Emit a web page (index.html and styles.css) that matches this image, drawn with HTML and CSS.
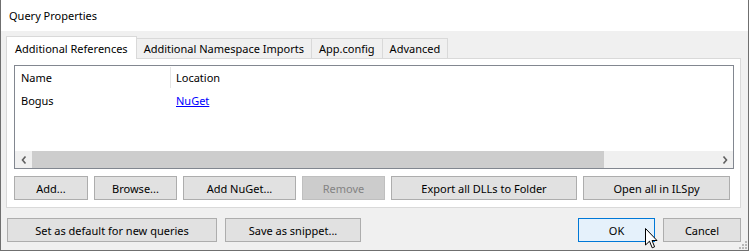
FILE: index.html
```html
<!DOCTYPE html>
<html lang="en">
<head>
    <meta charset="UTF-8">
    <title>Query Properties</title>
    <link rel="stylesheet" href="styles.css">
</head>
<body>
    <div class="window">
        <div class="titlebar">Query Properties</div>

        <div class="tabs">
            <div class="tab-strip">
                <div class="tab active">Additional References</div>
                <div class="tab">Additional Namespace Imports</div>
                <div class="tab">App.config</div>
                <div class="tab">Advanced</div>
            </div>
            <div class="tab-page">
                <div class="listview">
                    <div class="lv-header">
                        <div class="col col-name">Name</div>
                        <div class="col col-loc">Location</div>
                    </div>
                    <div class="lv-row">
                        <div class="col col-name">Bogus</div>
                        <div class="col col-loc"><a href="#" class="link">NuGet</a></div>
                    </div>
                    <div class="hscroll">
                        <div class="arrow">
                            <svg width="6" height="8" viewBox="0 0 6 8"><polyline points="4.5,0.5 1.5,4 4.5,7.5" fill="none" stroke="#606060" stroke-width="1.6"/></svg>
                        </div>
                        <div class="thumb"></div>
                        <div class="track"></div>
                        <div class="arrow">
                            <svg width="6" height="8" viewBox="0 0 6 8"><polyline points="1.5,0.5 4.5,4 1.5,7.5" fill="none" stroke="#606060" stroke-width="1.6"/></svg>
                        </div>
                    </div>
                </div>
                <div class="button-row">
                    <button class="btn w-add">Add...</button>
                    <button class="btn w-browse">Browse...</button>
                    <button class="btn w-nuget">Add NuGet...</button>
                    <button class="btn w-remove" disabled>Remove</button>
                    <button class="btn w-export">Export all DLLs to Folder</button>
                    <button class="btn w-ilspy">Open all in ILSpy</button>
                </div>
            </div>
        </div>

        <div class="footer">
            <button class="btn w-default">Set as default for new queries</button>
            <button class="btn w-snippet">Save as snippet...</button>
            <div class="spacer"></div>
            <button class="btn btn-primary w-ok">OK</button>
            <button class="btn w-cancel">Cancel</button>
        </div>

        <svg class="grip" width="8" height="8" viewBox="0 0 8 8">
            <rect x="6" y="0" width="2" height="2" fill="#b8b8b8"/>
            <rect x="3" y="3" width="2" height="2" fill="#b8b8b8"/>
            <rect x="6" y="3" width="2" height="2" fill="#b8b8b8"/>
            <rect x="0" y="6" width="2" height="2" fill="#b8b8b8"/>
            <rect x="3" y="6" width="2" height="2" fill="#b8b8b8"/>
            <rect x="6" y="6" width="2" height="2" fill="#b8b8b8"/>
        </svg>

        <svg class="cursor" width="13" height="21" viewBox="0 0 13 21">
            <path d="M0.5,0.5 L0.5,17 L4.5,13.2 L7.2,19.8 L9.6,18.8 L7,12.5 L12,12.5 Z" fill="#fff" stroke="#000" stroke-width="1" stroke-linejoin="miter"/>
        </svg>
    </div>
</body>
</html>
```

FILE: styles.css
```css
* {
    box-sizing: border-box;
}
body {
    margin: 0;
    font-family: "Noto Sans", "Open Sans", sans-serif;
    font-size: 11px;
    color: #000;
    background: #f0f0f0;
}
.window {
    position: relative;
    width: 749px;
    height: 251px;
    border: 1px solid #6f6f6f;
    background: #f0f0f0;
}
.titlebar {
    height: 31px;
    margin-top: -1px;
    padding-left: 8px;
    line-height: 31px;
    background: #fff;
}
.tabs {
    padding: 5px 7px 0 5px;
}
.tab-strip {
    display: flex;
    align-items: flex-end;
    height: 22px;
}
.tab {
    height: 20px;
    padding: 0 7px;
    line-height: 20px;
    border: 1px solid #d9d9d9;
    border-bottom: none;
    border-left: none;
    background: #f0f0f0;
    white-space: nowrap;
}
.tab.active {
    position: relative;
    z-index: 1;
    height: 23px;
    margin-bottom: -1px;
    padding: 0 8px 0 8px;
    line-height: 23px;
    border-left: 1px solid #d9d9d9;
    background: #fff;
}
.tab-page {
    height: 150px;
    padding: 6px 6px 7px 7px;
    border: 1px solid #d9d9d9;
    background: #fff;
}
.listview {
    display: flex;
    flex-direction: column;
    width: 720px;
    height: 104px;
    border: 1px solid #828790;
    background: #fff;
}
.lv-header {
    display: flex;
    height: 22px;
}
.lv-header .col {
    line-height: 24px;
}
.lv-header .col-name {
    height: 21px;
    margin-top: 1px;
    line-height: 22px;
    border-right: 1px solid #e5e5e5;
}
.lv-row {
    display: flex;
    height: 20px;
    line-height: 26px;
}
.col {
    padding-left: 6px;
    white-space: nowrap;
}
.col-name {
    width: 156px;
}
.col-loc {
    padding-left: 5px;
}
.link {
    color: #0000ff;
    text-decoration: underline;
}
.hscroll {
    display: flex;
    height: 17px;
    margin-top: auto;
    background: #f0f0f0;
}
.arrow {
    display: flex;
    align-items: center;
    justify-content: center;
    width: 17px;
}
.thumb {
    width: 572px;
    background: #cdcdcd;
}
.track {
    flex: 1;
}
.button-row {
    display: flex;
    gap: 6px;
    margin-top: 7px;
}
.btn {
    height: 24px;
    padding: 0;
    font-family: inherit;
    font-size: 11px;
    color: #000;
    background: #e1e1e1;
    border: 1px solid #adadad;
    border-radius: 0;
}
.btn:disabled {
    color: #838383;
    background: #cccccc;
    border-color: #bfbfbf;
}
.btn-primary {
    background: #e5f1fb;
    border-color: #0078d7;
}
.w-add { width: 74px; }
.w-browse { width: 83px; }
.w-nuget { width: 113px; }
.w-remove { width: 83px; }
.w-export { width: 186px; }
.w-ilspy { width: 147px; }
.footer {
    display: flex;
    gap: 8px;
    margin-top: 10px;
    padding: 0 7px 0 6px;
}
.spacer {
    flex: 1;
}
.w-default { width: 210px; }
.w-snippet { width: 136px; }
.w-ok { width: 77px; }
.w-cancel { width: 78px; }
.grip {
    position: absolute;
    right: 1px;
    bottom: 1px;
}
.cursor {
    position: absolute;
    left: 644px;
    top: 227px;
}
```
